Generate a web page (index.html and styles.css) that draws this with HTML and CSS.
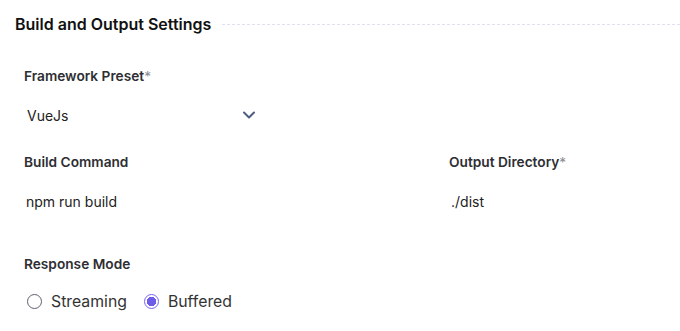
FILE: index.html
```html
<!DOCTYPE html>
<html lang="en">

<head>
  <meta charset="utf-8">
  <title>Build and Output Settings</title>
  <link rel="stylesheet" href="styles.css">
</head>

<body>
  <section id="settings">
    <div id="heading">
      <h2 id="title">Build and Output Settings</h2>
      <div id="rule"></div>
    </div>

    <div class="field" id="preset_field">
      <label class="label" for="preset">Framework Preset<span class="req">*</span></label>
      <div id="select">
        <span id="preset">VueJs</span>
        <svg class="chevron" width="14" height="10" viewBox="0 0 14 10">
          <path d="M2 2.5 L7 7.5 L12 2.5" fill="none" stroke="#4e5d7e" stroke-width="2" stroke-linecap="round" stroke-linejoin="round"/>
        </svg>
      </div>
    </div>

    <div id="pair">
      <div class="field">
        <label class="label">Build Command</label>
        <div class="value">npm run build</div>
      </div>
      <div class="field">
        <label class="label">Output Directory<span class="req">*</span></label>
        <div class="value">./dist</div>
      </div>
    </div>

    <div class="field" id="mode_field">
      <label class="label">Response Mode</label>
      <div id="radios">
        <label class="radio"><span class="dot"></span>Streaming</label>
        <label class="radio on"><span class="dot"></span>Buffered</label>
      </div>
    </div>
  </section>
</body>

</html>
```

FILE: styles.css
```css
*,
*:before,
*:after {
  box-sizing: border-box
}

* {
  margin: 0;
  padding: 0
}

html {
  font-family: Inter, 'Noto Sans', sans-serif;
  color: #1f1f24;
  background: #fff
}

body {
  width: 680px;
  height: 331px;
  overflow: hidden
}

#settings {
  padding: 13px 0 0 15px;
}

#heading {
  display: flex;
  align-items: center;
  gap: 11px;
  height: 22px
}

#title {
  font-size: 16px;
  font-weight: 600;
  color: #111;
  white-space: nowrap
}

#rule {
  flex: 1;
  border-top: 1px dashed #dfe2ee;
  margin-top: 1px
}

.field {
  padding-left: 9px
}

.label {
  display: block;
  font-size: 13.7px;
  font-weight: 600;
  color: #2e2e33;
  height: 18px;
  line-height: 18px
}

.req {
  color: #8a8a92;
  font-weight: 400
}

#preset_field {
  margin-top: 32px
}

#select {
  width: 240px;
  display: flex;
  align-items: center;
  justify-content: space-between;
  height: 20px;
  margin-top: 20px;
  padding-left: 3px;
  font-size: 14px;
  color: #222
}

.chevron {
  margin-right: 8px
}

#pair {
  display: grid;
  grid-template-columns: 425px 1fr;
  margin-top: 28px
}

.value {
  font-size: 14px;
  color: #222;
  height: 20px;
  line-height: 20px;
  margin-top: 21px;
  padding-left: 2px
}

#mode_field {
  margin-top: 43px
}

#radios {
  display: flex;
  gap: 17px;
  margin-top: 17px;
  padding-left: 3px
}

.radio {
  display: flex;
  align-items: center;
  gap: 9px;
  font-size: 15.8px;
  color: #333;
  height: 22px
}

.dot {
  width: 15px;
  height: 15px;
  border-radius: 50%;
  border: 1px solid #5b6170;
  background: #fff
}

.radio.on .dot {
  border: 1.5px solid #7565ee;
  background: radial-gradient(circle, #6c5ce7 0 4.5px, #fff 5px)
}
```
